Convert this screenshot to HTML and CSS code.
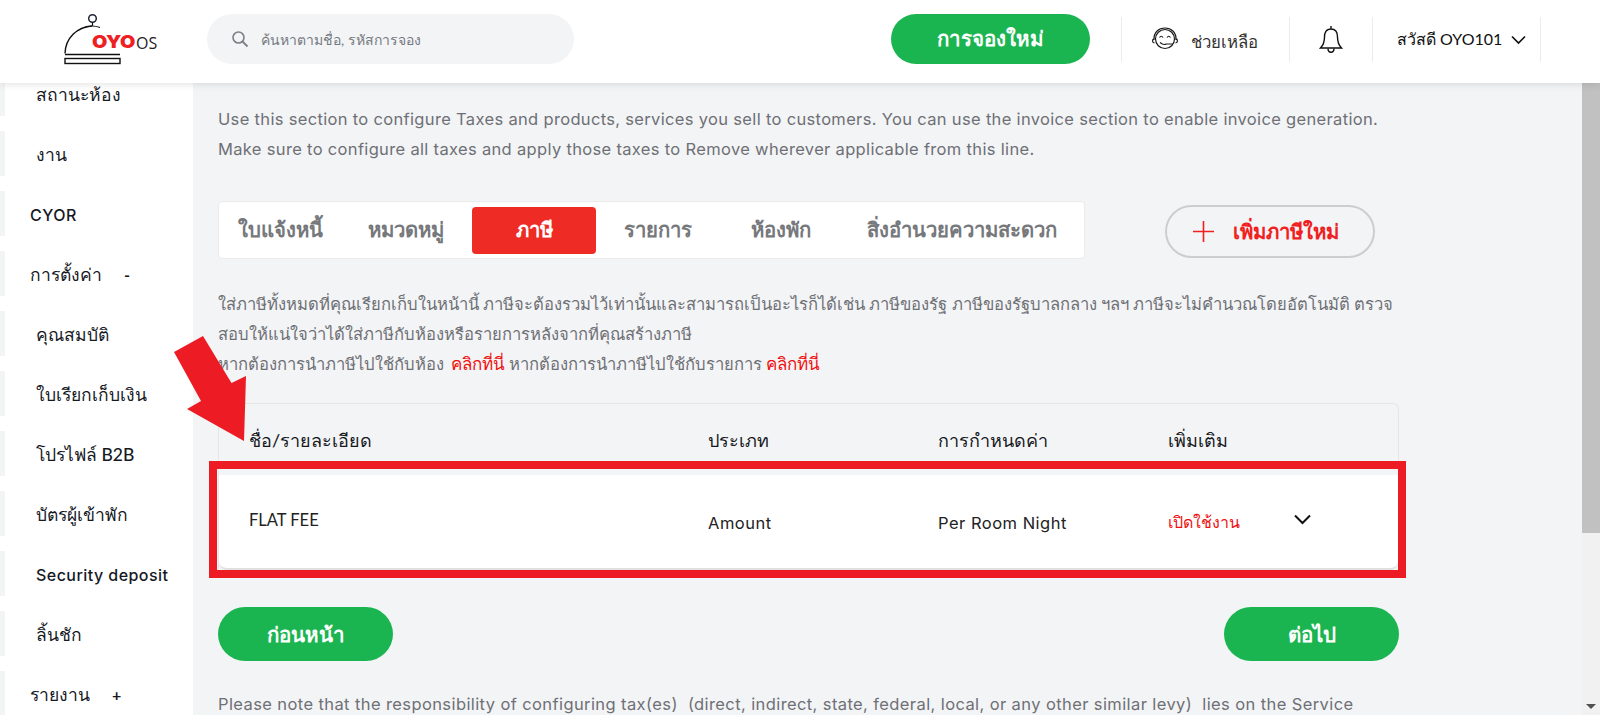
FILE: index.html
```html
<!DOCTYPE html>
<html lang="th">
<head>
<meta charset="utf-8">
<title>OYO OS</title>
<link rel="stylesheet" href="styles.css">
</head>
<body>
<div class="page">
  <header class="topbar">
    <div class="logo">
      <svg class="logo-mark" width="100" height="60" viewBox="0 0 100 60">
        <circle cx="32.500" cy="13.500" r="3.800" fill="none" stroke="#1d2433" stroke-width="1.500"/>
        <path d="M32.500 17.500v3.500M25 22.500q7-3 15 0" fill="none" stroke="#111" stroke-width="1.200"/>
        <path d="M5 48.500C5.500 33 17 22 32 21" fill="none" stroke="#111" stroke-width="1.400"/>
        <path d="M5 49.500H60" fill="none" stroke="#111" stroke-width="1.400"/>
        <rect x="5" y="53.500" width="55" height="5" fill="none" stroke="#111" stroke-width="1.400"/>
      </svg>
      <span class="logo-oyo">OYO</span><span class="logo-os">OS</span>
    </div>
    <div class="search">
      <svg class="search-icon" width="18" height="18" viewBox="0 0 18 18"><circle cx="7.500" cy="7.500" r="5.500" fill="none" stroke="#7b7f86" stroke-width="1.600"/><path d="M11.500 11.500L16.500 16.500" stroke="#7b7f86" stroke-width="1.800"/></svg>
      <span class="search-text">ค้นหาตามชื่อ, รหัสการจอง</span>
    </div>
    <button class="pill new-booking">การจองใหม่</button>
    <div class="top-cell help">
      <svg width="28" height="24" viewBox="0 0 28 24" fill="none" stroke="#1a1a1a" stroke-width="1.200"><circle cx="14" cy="12" r="9.500"/><path d="M3 13C2.500 5 8 1 14 1s11.500 4 11 12M3 11.500c-2 1-2 4 .5 4.500M25 11.500c2 1 2 4-.5 4.500"/><path d="M8.500 10.500q1.800-2.500 3.500 0M16 10.500q1.800-2.500 3.500 0"/><path d="M9 15.500q3.500 3 6.500 1.500h6"/></svg>
      <span>ช่วยเหลือ</span>
    </div>
    <div class="top-cell bell">
      <svg width="24" height="30" viewBox="0 0 24 30" fill="none" stroke="#111" stroke-width="1.400"><path d="M12 1v3M12 4c-5 0-6.500 4-6.500 8 0 5-1 8-4 11h21c-3-3-4-6-4-11 0-4-1.500-8-6.500-8z"/><path d="M9 23.500c0 5 6 5 6 0"/></svg>
    </div>
    <div class="top-cell user">
      <span>สวัสดี OYO101</span>
      <svg width="15" height="10" viewBox="0 0 15 10" fill="none" stroke="#111" stroke-width="1.700"><path d="M1 1.500l6.500 6.500 6.500-6.500"/></svg>
    </div>
  </header>

  <div class="workspace">
    <nav class="sidebar">
      <div class="nav-list">
        <div class="nav-item sub">สถานะห้อง</div>
        <div class="nav-item sub">งาน</div>
        <div class="nav-item latin">CYOR</div>
        <div class="nav-item">การตั้งค่า<span class="nav-sign">-</span></div>
        <div class="nav-item sub">คุณสมบัติ</div>
        <div class="nav-item sub">ใบเรียกเก็บเงิน</div>
        <div class="nav-item sub">โปรไฟล์ B2B</div>
        <div class="nav-item sub">บัตรผู้เข้าพัก</div>
        <div class="nav-item sub latin">Security deposit</div>
        <div class="nav-item sub">ลิ้นชัก</div>
        <div class="nav-item">รายงาน<span class="nav-sign">+</span></div>
      </div>
    </nav>

    <main class="content">
      <p class="intro">Use this section to configure Taxes and products, services you sell to customers. You can use the invoice section to enable invoice generation.<br>Make sure to configure all taxes and apply those taxes to Remove wherever applicable from this line.</p>

      <div class="tab-row">
        <div class="tabs">
          <div class="tab t1">ใบแจ้งหนี้</div>
          <div class="tab t2">หมวดหมู่</div>
          <div class="tab active">ภาษี</div>
          <div class="tab t4">รายการ</div>
          <div class="tab t5">ห้องพัก</div>
          <div class="tab t6">สิ่งอำนวยความสะดวก</div>
        </div>
        <button class="add-tax">
          <svg width="21" height="21" viewBox="0 0 21 21" stroke="#f02020" stroke-width="1.600"><path d="M10.500 0V21M0 10.500H21"/></svg>
          <span>เพิ่มภาษีใหม่</span>
        </button>
      </div>

      <p class="desc">ใส่ภาษีทั้งหมดที่คุณเรียกเก็บในหน้านี้ ภาษีจะต้องรวมไว้เท่านั้นและสามารถเป็นอะไรก็ได้เช่น ภาษีของรัฐ ภาษีของรัฐบาลกลาง ฯลฯ ภาษีจะไม่คำนวณโดยอัตโนมัติ ตรวจ<br>สอบให้แน่ใจว่าได้ใส่ภาษีกับห้องหรือรายการหลังจากที่คุณสร้างภาษี<br>หากต้องการนำภาษีไปใช้กับห้อง <a class="link">คลิกที่นี่</a> หากต้องการนำภาษีไปใช้กับรายการ <a class="link second">คลิกที่นี่</a></p>

      <section class="table">
        <div class="row head">
          <div class="col-name">ชื่อ/รายละเอียด</div>
          <div class="col-type">ประเภท</div>
          <div class="col-conf">การกำหนดค่า</div>
          <div class="col-more">เพิ่มเติม</div>
        </div>
        <div class="row body-row">
          <div class="col-name flat">FLAT FEE</div>
          <div class="col-type cell-latin">Amount</div>
          <div class="col-conf cell-latin">Per Room Night</div>
          <div class="col-more enable">เปิดใช้งาน</div>
          <svg class="row-chevron" width="17" height="11" viewBox="0 0 17 11" fill="none" stroke="#111" stroke-width="2"><path d="M1 1.500l7.500 7.500 7.500-7.500"/></svg>
        </div>
      </section>

      <div class="actions">
        <button class="pill step">ก่อนหน้า</button>
        <button class="pill step">ต่อไป</button>
      </div>

      <p class="note">Please note that the responsibility of configuring tax(es)&nbsp; (direct, indirect, state, federal, local, or any other similar levy)&nbsp; lies on the Service</p>

      <div class="callout-box"></div>
      <svg class="callout-arrow" width="80" height="110" viewBox="0 0 80 110"><polygon points="3,16 32,0 60.500,47 75,40 73,105 16,73 30,65" fill="#ed1c24"/></svg>
    </main>

    <div class="scrollbar">
      <div class="thumb"></div>
      <div class="arrow-down"></div>
    </div>
  </div>
</div>
</body>
</html>
```

FILE: styles.css
```css
* { box-sizing: border-box; }
html, body { margin: 0; height: 100%; overflow: hidden; }
body { font-family: Lato, "Noto Sans", sans-serif; color: #111; background: #fff; }
.page { display: flex; flex-direction: column; height: 715px; }

.topbar { position: relative; z-index: 2; height: 83px; flex: none; background: #fff; display: flex; align-items: center; box-shadow: 0 1px 8px rgba(0,0,0,.12); padding-bottom: 6px; }
.logo { width: 207px; height: 83px; flex: none; position: relative; margin-top: 6px; }
.logo-mark { position: absolute; left: 60px; top: 5px; }
.logo-oyo { position: absolute; left: 92px; top: 30px; font: 900 18px/24px Inter, sans-serif; color: #ee2024; letter-spacing: -.3px; transform: scaleX(1.1); transform-origin: left center; }
.logo-os { position: absolute; left: 136px; top: 32px; font: 400 16px/22px "Open Sans", sans-serif; color: #222; }

.search { width: 367px; height: 50px; flex: none; border-radius: 25px; background: #f3f4f6; display: flex; align-items: center; padding-left: 24px; gap: 12px; }
.search-icon { margin-top: 1px; }
.search-text { font-size: 14px; color: #75797f; padding-top: 2px; }

.pill { border: 0; background: #1ab550; color: #fff; font-family: inherit; font-weight: 700; font-size: 20.500px; border-radius: 27px; }
.new-booking { width: 199px; height: 50px; margin-left: 317px; flex: none; }

.top-cell { height: 45px; margin-top: 2px; display: flex; align-items: center; flex: none; border-right: 1px solid #ececec; font-size: 16px; }
.help { margin-left: 31px; width: 169px; border-left: 1px solid #ececec; padding-left: 29px; gap: 12px; color: #333; font-size: 16.800px; padding-top: 4px; }
.help svg { margin-top: -6px; }
.bell { width: 83px; justify-content: center; }
.user { width: 168px; padding-left: 24px; gap: 9px; }

.workspace { flex: 1; display: flex; min-height: 0; }
.sidebar { width: 193px; flex: none; background: #fff; overflow: hidden; }
.nav-list { margin-top: -12px; display: flex; flex-direction: column; gap: 15px; }
.nav-item { height: 45px; flex: none; border-left: 5px solid #f3f4f6; padding: 2px 0 0 25px; display: flex; align-items: center; font-size: 17.500px; font-weight: 500; color: #16191f; }
.nav-item.sub { padding-left: 31px; }
.nav-item.latin { font-family: Inter, sans-serif; font-size: 16px; letter-spacing: .45px; }
.nav-sign { margin-left: 22px; font-weight: 700; font-size: 16px; }

.content { position: relative; flex: 1; min-width: 0; background: #f3f4f6; padding: 21px 0 0 25px; }
.intro { margin: 0; font-family: Inter, sans-serif; font-size: 16.500px; letter-spacing: .33px; line-height: 30px; color: #6e7075; width: 1250px; white-space: nowrap; }

.tab-row { display: flex; align-items: flex-start; margin-top: 37px; }
.tabs { width: 867px; height: 58px; background: #fff; border: 1px solid #ebebeb; border-radius: 4px; display: flex; align-items: center; padding-left: 19px; }
.tab { font-size: 20.300px; font-weight: 600; color: #76787c; white-space: nowrap; }
.t2 { margin-left: 45px; }
.active { width: 124px; height: 47px; margin-left: 28px; background: #ee2b24; color: #fff; border-radius: 4px; font-weight: 700; display: flex; align-items: center; justify-content: center; }
.t4 { margin-left: 28px; }
.t5 { margin-left: 59px; }
.t6 { margin-left: 56px; }
.add-tax { width: 210px; height: 53px; margin: 4px 0 0 80px; background: transparent; border: 2px solid #cdcdcd; border-radius: 27px; display: flex; align-items: center; padding-left: 26px; gap: 19px; color: #f02020; font-family: inherit; font-weight: 700; font-size: 20.300px; }

.desc { margin: 30px 0 0; font-size: 16.600px; line-height: 30px; color: #6e7075; width: 1250px; white-space: nowrap; }
.link { color: #f01010; font-size: 17px; margin-left: 3px; }
.link.second { margin-left: -1px; }

.table { width: 1181px; margin-top: 24px; border: 1px solid #e6e6e6; border-bottom: 0; border-radius: 6px 6px 0 0; }
.row { position: relative; display: grid; grid-template-columns: 459px 230px 230px 1fr; padding-left: 30px; font-size: 16px; }
.head { height: 71px; padding-top: 23px; font-size: 18px; font-weight: 500; color: #17191d; line-height: 26px; }
.body-row { height: 95px; background: #fff; align-items: center; border-bottom: 2px solid #e0e0e0; border-radius: 0 0 8px 8px; color: #222; padding-top: 2px; }
.cell-latin { font-family: Inter, sans-serif; font-size: 16.500px; letter-spacing: .5px; }
.flat { margin-top: -6px; font-size: 16.500px; }
.enable { color: #f01010; }
.row-chevron { position: absolute; left: 1075px; top: 39px; }

.actions { display: flex; justify-content: space-between; width: 1181px; margin-top: 37px; }
.step { width: 175px; height: 54px; }
.note { margin: 30px 0 0; font-family: Inter, sans-serif; font-size: 16.500px; letter-spacing: .4px; line-height: 26px; color: #6e7075; white-space: nowrap; }

.callout-box { position: absolute; left: 16px; top: 378px; width: 1197px; height: 117px; border: 8px solid #ed1c24; }
.callout-arrow { position: absolute; left: -22px; top: 253px; }

.scrollbar { width: 18px; flex: none; background: #f1f1f1; position: relative; }
.thumb { height: 450px; background: #c1c1c1; }
.arrow-down { position: absolute; left: 4px; bottom: 6px; width: 0; height: 0; border: 5px solid transparent; border-top: 5px solid #505050; border-bottom: 0; }
```
